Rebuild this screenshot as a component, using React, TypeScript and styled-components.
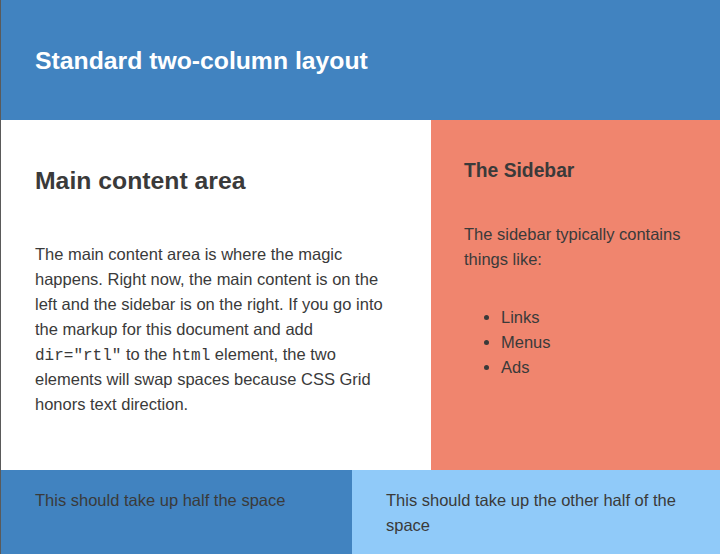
import React from "react";
import styled, { createGlobalStyle } from "styled-components";

const GlobalStyle = createGlobalStyle`
  html, body {
    margin: 0;
    padding: 0;
    background: #ffffff;
  }
  body {
    font-family: "Liberation Sans", Arial, Helvetica, sans-serif;
    font-size: 16.5px;
    color: #3a3a3a;
  }
`;

const Page = styled.div`
  border-left: 1px solid #5a5a5a;
  min-height: 554px;
  box-sizing: border-box;
`;

const Header = styled.header`
  height: 120px;
  background: #4183c0;
  display: flex;
  align-items: center;
  padding: 1px 34px 0 34px;
  box-sizing: border-box;
`;

const Title = styled.h1`
  margin: 0;
  color: #ffffff;
  font-size: 24.75px;
  line-height: 30px;
  font-weight: 700;
`;

const Row = styled.div<{ $first: number }>`
  display: grid;
  grid-template-columns: ${(p) => p.$first}px 1fr;
`;

const Main = styled.main`
  background: #ffffff;
  padding: 46px 34px 53px 34px;
`;

const MainHeading = styled.h2`
  margin: 0 0 46px 0;
  font-size: 24.75px;
  line-height: 30px;
  font-weight: 700;
  color: #3a3a3a;
`;

const Paragraph = styled.p<{ $gap?: number }>`
  margin: 0 0 ${(p) => p.$gap ?? 0}px 0;
  font-size: 16.5px;
  line-height: 25px;
  color: #3a3a3a;
`;

const Code = styled.code`
  font-family: "Liberation Mono", "Courier New", monospace;
  font-size: 16px;
  line-height: 1;
`;

const Sidebar = styled.aside`
  background: #f0856e;
  padding: 39px 33px 30px 33px;
`;

const SideHeading = styled.h3`
  margin: 0 0 39px 0;
  font-size: 19.3px;
  line-height: 24px;
  font-weight: 700;
  color: #3a3a3a;
`;

const List = styled.ul`
  margin: 0;
  padding-left: 37px;
  list-style: disc;
`;

const Item = styled.li`
  font-size: 16.5px;
  line-height: 25px;
  color: #3a3a3a;
`;

const FooterCell = styled.div<{ $tone: "dark" | "light" }>`
  background: ${(p) => (p.$tone === "dark" ? "#4183c0" : "#90caf9")};
  padding: 18px 34px 17px 34px;
  font-size: 16.5px;
  line-height: 25px;
  color: #3a3a3a;
`;

export default function App() {
  return (
    <>
      <GlobalStyle />
      <Page>
        <Header>
          <Title>Standard two-column layout</Title>
        </Header>
        <Row $first={430}>
          <Main>
            <MainHeading>Main content area</MainHeading>
            <Paragraph>
              The main content area is where the magic happens. Right now, the
              main content is on the left and the sidebar is on the right. If
              you go into the markup for this document and add{" "}
              <Code>dir="rtl"</Code> to the <Code>html</Code> element, the two
              elements will swap spaces because CSS Grid honors text direction.
            </Paragraph>
          </Main>
          <Sidebar>
            <SideHeading>The Sidebar</SideHeading>
            <Paragraph $gap={33}>
              The sidebar typically contains things like:
            </Paragraph>
            <List>
              <Item>Links</Item>
              <Item>Menus</Item>
              <Item>Ads</Item>
            </List>
          </Sidebar>
        </Row>
        <Row $first={351}>
          <FooterCell $tone="dark">This should take up half the space</FooterCell>
          <FooterCell $tone="light">
            This should take up the other half of the space
          </FooterCell>
        </Row>
      </Page>
    </>
  );
}
